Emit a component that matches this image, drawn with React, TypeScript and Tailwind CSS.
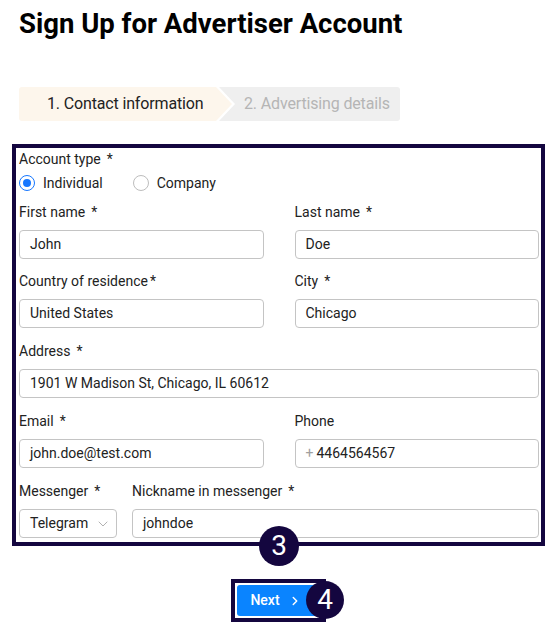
import React from "react"
import { ChevronDown, ChevronRight } from "lucide-react"

const NAVY = "border-[#14063f]"

const Label = ({ text, tight = false, required = true }: { text: string; tight?: boolean; required?: boolean }) => (
	<div className="h-[17px] leading-[17px] text-[14px] text-[#222] mb-[9px] whitespace-nowrap">
		{text}
		{required && <span className={tight ? "ml-[2px]" : "ml-[6px]"}>*</span>}
	</div>
)

const Input = ({ value, prefix }: { value: string; prefix?: string }) => (
	<div className="h-[29px] w-full flex items-center rounded-[4px] border border-[#c4c4c4] bg-white pl-[10px] text-[14px] text-[#222]">
		{prefix && <span className="text-[#a0a0a0] mr-[3px]">{prefix}</span>}
		{value}
	</div>
)

const Radio = ({ checked, label }: { checked: boolean; label: string }) => (
	<div className="flex items-center gap-[8px]">
		<span
			className={
				checked
					? "w-[16px] h-[16px] rounded-full border-[1.5px] border-[#1677ff] flex items-center justify-center"
					: "w-[16px] h-[16px] rounded-full border border-[#bdbdbd]"
			}
		>
			{checked && <span className="w-[8px] h-[8px] rounded-full bg-[#1677ff]" />}
		</span>
		<span className="text-[14px] text-[#222]">{label}</span>
	</div>
)

const Badge = ({ n, className }: { n: number; className: string }) => (
	<div
		className={`absolute rounded-full bg-[#14063f] text-white flex items-center justify-center text-[28px] leading-none ${className}`}
	>
		{n}
	</div>
)

export default function App() {
	return (
		<div className="w-[557px] min-h-[630px] bg-white font-['Roboto',sans-serif] text-[#222]">
			<h1 className="pl-[19px] pt-[7px] text-[27.5px] leading-[34px] font-bold text-black">Sign Up for Advertiser Account</h1>

			{/* stepper */}
			<div className="ml-[19px] mt-[46px] flex h-[34px] w-[381px]">
				<div
					className="w-[213px] h-full bg-[#fdf6ec] rounded-l-[3px] flex items-center pl-[28px] text-[16px] tracking-[-0.15px] text-[#222]"
					style={{ clipPath: "polygon(0 0, calc(100% - 16px) 0, 100% 50%, calc(100% - 16px) 100%, 0 100%)" }}
				>
					1. Contact information
				</div>
				<div
					className="flex-1 -ml-[13px] h-full bg-[#efefef] rounded-r-[3px] flex items-center pl-[25px] text-[16px] tracking-[-0.15px] text-[#b5b5b5]"
					style={{ clipPath: "polygon(0 0, 100% 0, 100% 100%, 0 100%, 16px 50%)" }}
				>
					2. Advertising details
				</div>
			</div>

			{/* form */}
			<div className="relative mx-[12px] mt-[23px]">
				<div className={`border-4 ${NAVY} pl-[3px] pr-[2px] pt-[3px] pb-[4px]`}>
					<Label text="Account type" />
					<div className="flex items-center gap-[30px] h-[20px] -mt-[4px]">
						<Radio checked label="Individual" />
						<Radio checked={false} label="Company" />
					</div>

					<div className="mt-[11px] flex flex-col">
						<div className="grid grid-cols-2 gap-x-[31px]">
							<div>
								<Label text="First name" />
								<Input value="John" />
							</div>
							<div>
								<Label text="Last name" />
								<Input value="Doe" />
							</div>
						</div>
						<div className="grid grid-cols-2 gap-x-[31px] mt-[14px]">
							<div>
								<Label text="Country of residence" tight />
								<Input value="United States" />
							</div>
							<div>
								<Label text="City" />
								<Input value="Chicago" />
							</div>
						</div>
						<div className="mt-[15px]">
							<Label text="Address" />
							<Input value="1901 W Madison St, Chicago, IL 60612" />
						</div>
						<div className="grid grid-cols-2 gap-x-[31px] mt-[15px]">
							<div>
								<Label text="Email" />
								<Input value="john.doe@test.com" />
							</div>
							<div>
								<Label text="Phone" required={false} />
								<Input prefix="+" value="4464564567" />
							</div>
						</div>
						<div className="flex gap-[15px] mt-[15px]">
							<div className="w-[98px]">
								<Label text="Messenger" />
								<div className="h-[29px] flex items-center justify-between rounded-[4px] border border-[#c4c4c4] pl-[10px] pr-[5px] text-[14px] text-[#222]">
									Telegram
									<ChevronDown size={16} strokeWidth={1} className="text-[#8a8a8a]" />
								</div>
							</div>
							<div className="flex-1">
								<Label text="Nickname in messenger" />
								<Input value="johndoe" />
							</div>
						</div>
					</div>
				</div>
				<Badge n={3} className="w-[40px] h-[40px] left-[247px] -bottom-[20px]" />
			</div>

			{/* next */}
			<div className="mt-[33px] flex justify-center">
				<div className="relative">
					<div className={`border-4 ${NAVY} p-[2px] w-[95px]`}>
						<div className="h-[31px] w-[84px] rounded-[3px] bg-[#0a84ff] flex items-center justify-center gap-[8px] text-[14px] font-medium text-white pr-[6px]">
							Next
							<ChevronRight size={14} strokeWidth={2.5} />
						</div>
					</div>
					<Badge n={4} className="w-[38px] h-[38px] left-[75px] top-[2px]" />
				</div>
			</div>
		</div>
	)
}
